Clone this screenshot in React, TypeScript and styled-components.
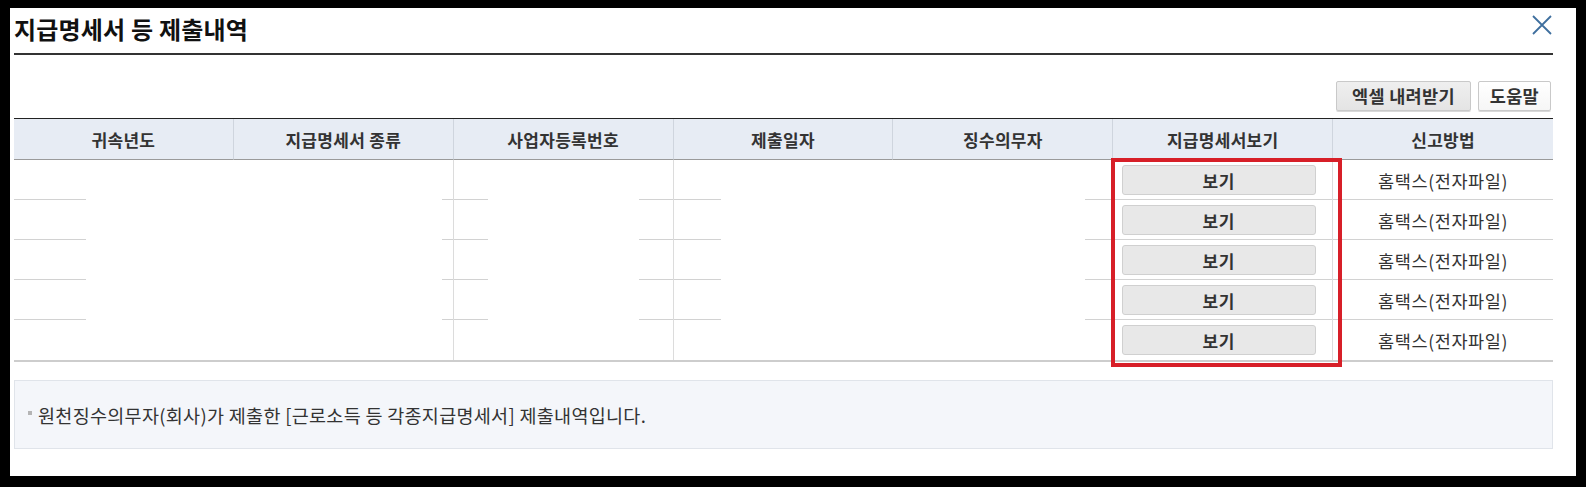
import styled, { createGlobalStyle } from "styled-components";

const GlobalStyle = createGlobalStyle`
  html, body {
    margin: 0;
    padding: 0;
    background: #000;
  }
  body {
    font-family: "Noto Sans CJK KR", "Noto Sans", sans-serif;
    color: #333;
  }
`;

const Frame = styled.div`
  width: 1586px;
  height: 487px;
  box-sizing: border-box;
  padding: 8px 10px 11px 10px;
  background: #000;
`;

const Panel = styled.div`
  height: 100%;
  box-sizing: border-box;
  background: #fff;
  padding: 0 23px 0 4px;
`;

const TitleBar = styled.div`
  height: 47px;
  box-sizing: border-box;
  border-bottom: 2px solid #333;
  display: flex;
  justify-content: space-between;
  align-items: flex-start;
`;

const Title = styled.h1`
  margin: 0;
  padding-top: 6px;
  font-size: 24px;
  line-height: 30px;
  font-weight: 700;
  color: #111;
  letter-spacing: 0.2px;
`;

const Close = styled.button`
  margin-top: 6px;
  padding: 0;
  width: 22px;
  height: 22px;
  border: 0;
  background: transparent;
  display: flex;
`;

const Toolbar = styled.div`
  margin-top: 26px;
  padding-right: 2px;
  display: flex;
  justify-content: flex-end;
  gap: 7px;
`;

const ToolButton = styled.button<{ $light?: boolean }>`
  height: 30px;
  padding: 0 ${(p) => (p.$light ? "11px" : "15px")};
  box-sizing: border-box;
  border: 1px solid #c9c9c9;
  border-radius: 2px;
  background: ${(p) =>
    p.$light
      ? "linear-gradient(#ffffff, #f6f6f6)"
      : "linear-gradient(#efefef, #e4e4e4)"};
  box-shadow: 0 1px 0 #d8d8d8;
  font-family: inherit;
  font-size: 17.5px;
  font-weight: 700;
  color: #333;
  line-height: 1;
  letter-spacing: 0.3px;
`;

const TableWrap = styled.div`
  position: relative;
  margin-top: 7px;
`;

const Grid = styled.div`
  display: grid;
  grid-template-columns: repeat(7, 1fr);
`;

const HeadRow = styled(Grid)`
  border-top: 1px solid #222;
  background: #e7ecf4;
`;

const Th = styled.div<{ $last?: boolean }>`
  height: 41px;
  box-sizing: border-box;
  border-bottom: 1px solid #9a9a9a;
  border-right: ${(p) => (p.$last ? "0" : "1px solid #cfd5de")};
  display: flex;
  align-items: center;
  justify-content: center;
  font-size: 17px;
  font-weight: 700;
  color: #333;
  letter-spacing: 0.3px;
`;

const Body = styled.div`
  border-bottom: 2px solid #cdcdcd;
`;

const segLine = (segs: number[][]) =>
  segs
    .map(
      ([x, w]) =>
        `linear-gradient(#d2d2d2, #d2d2d2) ${x}px 100% / ${w}px 1px no-repeat`
    )
    .join(", ");

const Td = styled.div<{ $divider?: boolean; $segs: number[][] }>`
  height: 40px;
  box-sizing: border-box;
  border-right: ${(p) => (p.$divider ? "1px solid #dcdcdc" : "0")};
  background: ${(p) => (p.$segs.length ? segLine(p.$segs) : "none")};
  display: flex;
  align-items: center;
  justify-content: center;
  font-size: 17.5px;
  color: #333;
  letter-spacing: 0.6px;
`;

const ViewButton = styled.button`
  width: 194px;
  height: 30px;
  margin-left: -8px;
  box-sizing: border-box;
  border: 1px solid #d0d0d0;
  border-radius: 3px;
  background: #e8e8e8;
  font-family: inherit;
  font-size: 17px;
  font-weight: 700;
  color: #333;
  letter-spacing: 0.5px;
`;

const Highlight = styled.div`
  position: absolute;
  left: 1097px;
  top: 40px;
  width: 231px;
  height: 209px;
  box-sizing: border-box;
  border: 4px solid #d71f28;
  pointer-events: none;
`;

const Notice = styled.div`
  margin-top: 18px;
  height: 69px;
  box-sizing: border-box;
  border: 1px solid #e0e4ea;
  background: #f4f6fa;
  padding-left: 13px;
  display: flex;
  align-items: center;
  gap: 6px;
  font-size: 18.5px;
  color: #333;
  letter-spacing: 0.3px;
`;

const Bullet = styled.span`
  width: 4px;
  height: 4px;
  background: #b5b5b5;
  margin-top: -3px;
`;

const headers = [
  "귀속년도",
  "지급명세서 종류",
  "사업자등록번호",
  "제출일자",
  "징수의무자",
  "지급명세서보기",
  "신고방법",
];

// leftover rule pieces in the masked columns, [x, width] within a cell
const FULL = [[0, 400]];
const rowSegs: number[][][] = [
  [[0, 72]],
  [[208, 12]],
  [
    [0, 34],
    [185, 35],
  ],
  [[0, 47]],
  [[192, 30]],
  FULL,
  FULL,
];
const dividers = [false, true, true, false, true, true, false];

export default function App() {
  const rows = [0, 1, 2, 3, 4];
  return (
    <>
      <GlobalStyle />
      <Frame>
        <Panel>
          <TitleBar>
            <Title>지급명세서 등 제출내역</Title>
            <Close aria-label="닫기">
              <svg width="22" height="22" viewBox="0 0 22 22">
                <path
                  d="M2 2 L20 20 M20 2 L2 20"
                  stroke="#3f6f9e"
                  strokeWidth="1.8"
                  fill="none"
                />
              </svg>
            </Close>
          </TitleBar>
          <Toolbar>
            <ToolButton>엑셀 내려받기</ToolButton>
            <ToolButton $light>도움말</ToolButton>
          </Toolbar>
          <TableWrap>
            <HeadRow>
              {headers.map((h, i) => (
                <Th key={h} $last={i === headers.length - 1}>
                  {h}
                </Th>
              ))}
            </HeadRow>
            <Body>
              {rows.map((r) => (
                <Grid key={r}>
                  {headers.map((h, i) => (
                    <Td
                      key={h}
                      $divider={dividers[i]}
                      $segs={r === rows.length - 1 ? [] : rowSegs[i]}
                    >
                      {i === 5 && <ViewButton>보기</ViewButton>}
                      {i === 6 && "홈택스(전자파일)"}
                    </Td>
                  ))}
                </Grid>
              ))}
            </Body>
            <Highlight />
          </TableWrap>
          <Notice>
            <Bullet />
            원천징수의무자(회사)가 제출한 [근로소득 등 각종지급명세서] 제출내역입니다.
          </Notice>
        </Panel>
      </Frame>
    </>
  );
}
